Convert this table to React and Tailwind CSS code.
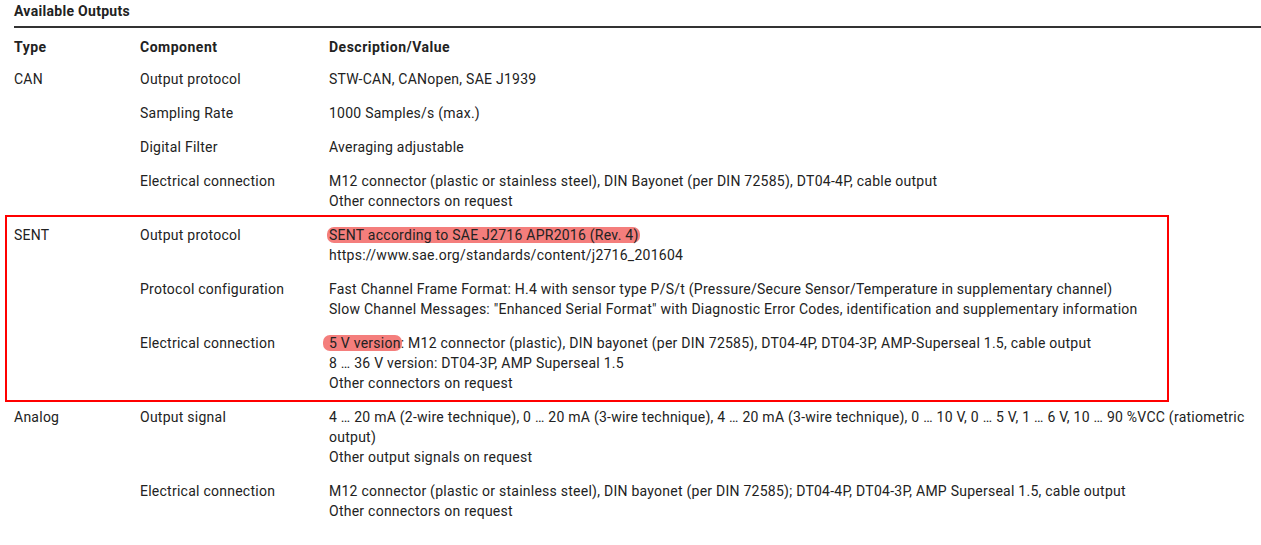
import React from "react";

const font = { fontFamily: "Roboto, 'Liberation Sans', sans-serif" };

function Row({ type, component, children }) {
  return (
    <div className="grid grid-cols-[126px_189px_1fr] py-[7px] leading-[20px]">
      <div>{type}</div>
      <div>{component}</div>
      <div>{children}</div>
    </div>
  );
}

function Mark({ children, wide }) {
  return (
    <span
      className={
        "bg-[#f47e7c] rounded-[7px] " +
        (wide ? "-ml-[6px] pl-[6px] pr-[1px] -mr-[1px]" : "-ml-[2px] pl-[2px] pr-[1px] -mr-[1px]")
      }
    >
      {children}
    </span>
  );
}

export default function App() {
  return (
    <div className="bg-white w-[1261px] h-[545px] text-[#222] text-[14px] tracking-[0.25px] pl-[14px] pr-[8px]" style={font}>
      <div className="text-[14px] tracking-[0.3px] font-bold leading-[20px] pt-[1px] pb-[5px]">Available Outputs</div>
      <div className="h-[2px] bg-[#333] -mr-[8px]" />

      <div className="grid grid-cols-[126px_189px_1fr] pt-[9px] pb-[5px] leading-[20px] font-bold tracking-[0.5px]">
        <div>Type</div>
        <div>Component</div>
        <div>Description/Value</div>
      </div>

      <Row type="CAN" component="Output protocol">STW-CAN, CANopen, SAE J1939</Row>
      <Row component="Sampling Rate">1000 Samples/s (max.)</Row>
      <Row component="Digital Filter">Averaging adjustable</Row>
      <Row component="Electrical connection">
        M12 connector (plastic or stainless steel), DIN Bayonet (per DIN 72585), DT04-4P, cable output
        <br />
        Other connectors on request
      </Row>

      <div className="relative">
        <div className="absolute pointer-events-none border-2 border-[#ff0000] -top-[3px] -bottom-[2px] -left-[9px] right-[84px]" />
        <Row type="SENT" component="Output protocol">
          <Mark>SENT according to SAE J2716 APR2016 (Rev. 4)</Mark>
          <br />
          https://www.sae.org/standards/content/j2716_201604
        </Row>
        <Row component="Protocol configuration">
          Fast Channel Frame Format: H.4 with sensor type P/S/t (Pressure/Secure Sensor/Temperature in supplementary channel)
          <br />
          Slow Channel Messages: "Enhanced Serial Format" with Diagnostic Error Codes, identification and supplementary information
        </Row>
        <Row component="Electrical connection">
          <Mark wide>5 V version</Mark>: M12 connector (plastic), DIN bayonet (per DIN 72585), DT04-4P, DT04-3P, AMP-Superseal 1.5, cable output
          <br />
          8 … 36 V version: DT04-3P, AMP Superseal 1.5
          <br />
          Other connectors on request
        </Row>
      </div>

      <Row type="Analog" component="Output signal">
        4 … 20 mA (2-wire technique), 0 … 20 mA (3-wire technique), 4 … 20 mA (3-wire technique), 0 … 10 V, 0 … 5 V, 1 … 6 V, 10 … 90 %VCC (ratiometric output)
        <br />
        Other output signals on request
      </Row>
      <Row component="Electrical connection">
        M12 connector (plastic or stainless steel), DIN bayonet (per DIN 72585); DT04-4P, DT04-3P, AMP Superseal 1.5, cable output
        <br />
        Other connectors on request
      </Row>
    </div>
  );
}
